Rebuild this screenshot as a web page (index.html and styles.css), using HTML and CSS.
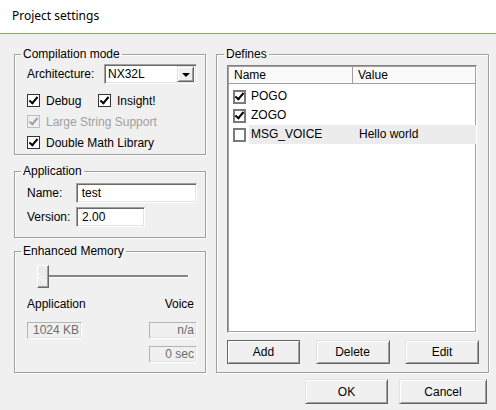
FILE: index.html
```html
<!DOCTYPE html>
<html lang="en">

<head>
    <meta charset="UTF-8">
    <title>Project settings</title>
    <link rel="stylesheet" href="styles.css">
</head>

<body>
    <!-- title bar -->
    <div class="titlebar">Project settings</div>

    <div class="main">
        <!-- left column -->
        <div class="col-left">
            <fieldset class="group">
                <legend>Compilation mode</legend>
                <div class="arch-row">
                    <span>Architecture:</span>
                    <div class="combo">
                        <span class="combo-text">NX32L</span>
                        <span class="combo-btn"><i class="tri"></i></span>
                    </div>
                </div>
                <div class="check-grid">
                    <label class="check"><span class="box on"></span>Debug</label>
                    <label class="check"><span class="box on"></span>Insight!</label>
                    <label class="check disabled full"><span class="box on"></span>Large String Support</label>
                    <label class="check full"><span class="box on"></span>Double Math Library</label>
                </div>
            </fieldset>

            <fieldset class="group app">
                <legend>Application</legend>
                <div class="field-row">
                    <span class="field-label">Name:</span>
                    <div class="edit name">test</div>
                </div>
                <div class="field-row">
                    <span class="field-label">Version:</span>
                    <div class="edit version">2.00</div>
                </div>
            </fieldset>

            <fieldset class="group mem">
                <legend>Enhanced Memory</legend>
                <div class="slider">
                    <span class="thumb"></span>
                    <span class="track"></span>
                </div>
                <div class="mem-labels">
                    <span>Application</span>
                    <span class="voice">Voice</span>
                </div>
                <div class="mem-row">
                    <div class="ro app-size">1024 KB</div>
                    <div class="ro">n/a</div>
                </div>
                <div class="mem-row right">
                    <div class="ro">0 sec</div>
                </div>
            </fieldset>
        </div>

        <!-- right column -->
        <fieldset class="group defines">
            <legend>Defines</legend>
            <div class="listview">
                <div class="lv-head">
                    <span class="lv-col name-col">Name</span>
                    <span class="lv-col value-col">Value</span>
                </div>
                <div class="lv-row">
                    <span class="lv-box on"></span>
                    <span class="lv-name">POGO</span>
                    <span class="lv-value"></span>
                </div>
                <div class="lv-row">
                    <span class="lv-box on"></span>
                    <span class="lv-name">ZOGO</span>
                    <span class="lv-value"></span>
                </div>
                <div class="lv-row selected">
                    <span class="lv-box"></span>
                    <span class="lv-name">MSG_VOICE</span>
                    <span class="lv-value">Hello world</span>
                </div>
            </div>
            <div class="lv-buttons">
                <button class="btn default">Add</button>
                <button class="btn">Delete</button>
                <button class="btn">Edit</button>
            </div>
        </fieldset>
    </div>

    <div class="footer">
        <button class="btn ok">OK</button>
        <button class="btn cancel">Cancel</button>
    </div>
</body>

</html>
```

FILE: styles.css
```css
* {
    box-sizing: border-box;
}

body {
    margin: 0;
    width: 496px;
    height: 410px;
    overflow: hidden;
    background: #f0f0f0;
    font-family: "Liberation Sans", Arial, sans-serif;
    font-size: 12px;
    color: #000;
}

/* 标题栏 */
.titlebar {
    height: 34px;
    background: #fff;
    border-bottom: 1px solid #86a868;
    padding-left: 12px;
    font-family: "Noto Sans", "Open Sans", sans-serif;
    font-size: 12px;
    line-height: 32px;
    color: #000;
}

.main {
    display: flex;
    gap: 10px;
    padding: 13px 0 0 14px;
}

.col-left {
    width: 192px;
    display: flex;
    flex-direction: column;
}

/* group boxes */
.group {
    margin: 0;
    min-width: 0;
    padding: 0 8px 0 12px;
    border: 1px solid #a0a0a0;
    box-shadow: 1px 1px 0 #fff, inset 1px 1px 0 #fff;
}

.group legend {
    margin-left: -6px;
    padding: 0 2px;
    line-height: 14px;
}

/* compilation mode */
.arch-row {
    display: flex;
    align-items: center;
    margin-top: 3px;
    height: 20px;
}

.combo {
    margin-left: auto;
    width: 93px;
    height: 20px;
    display: flex;
    align-items: center;
    background: #fff;
    border: 1px solid;
    border-color: #a0a0a0 #fff #fff #a0a0a0;
    box-shadow: inset 1px 1px 0 #696969, inset -1px -1px 0 #e3e3e3;
}

.combo-text {
    flex: 1;
    padding-left: 3px;
}

.combo-btn {
    width: 17px;
    height: 16px;
    margin-right: 2px;
    display: flex;
    align-items: center;
    justify-content: center;
    background: #f0f0f0;
    border: 1px solid;
    border-color: #e3e3e3 #696969 #696969 #e3e3e3;
    box-shadow: inset 1px 1px 0 #fff, inset -1px -1px 0 #a0a0a0;
}

.tri {
    width: 0;
    height: 0;
    border-left: 4px solid transparent;
    border-right: 4px solid transparent;
    border-top: 4px solid #000;
    margin-top: 1px;
}

.check-grid {
    display: grid;
    grid-template-columns: 71px auto;
    grid-auto-rows: 21px;
    margin: 6px 0 1px;
}

.check {
    display: flex;
    align-items: center;
}

.check.full {
    grid-column: 1 / 3;
}

.box {
    width: 13px;
    height: 13px;
    margin-right: 6px;
    background: #fff;
    border: 1px solid #333;
    position: relative;
}

.box.on::after {
    content: "";
    position: absolute;
    left: 3px;
    top: 0px;
    width: 3px;
    height: 7px;
    border-right: 2px solid #000;
    border-bottom: 2px solid #000;
    transform: rotate(40deg);
}

.check.disabled {
    color: #a0a0a0;
}

.check.disabled .box {
    border-color: #bcbcbc;
    background: #f0f0f0;
}

.check.disabled .box::after {
    border-color: #a0a0a0;
}

/* application */
.app {
    margin-top: 9px;
    padding-top: 5px;
    padding-bottom: 10px;
}

.field-row {
    display: flex;
    align-items: center;
    height: 20px;
}

.field-row + .field-row {
    margin-top: 4px;
}

.field-label {
    width: 49px;
}

.edit {
    height: 20px;
    line-height: 18px;
    padding-left: 5px;
    background: #fff;
    border: 1px solid;
    border-color: #a0a0a0 #fff #fff #a0a0a0;
    box-shadow: inset 1px 1px 0 #696969, inset -1px -1px 0 #e3e3e3;
}

.edit.name {
    width: 122px;
}

.edit.version {
    width: 69px;
}

/* enhanced memory */
.mem {
    margin-top: 6px;
    padding-bottom: 9px;
}

.slider {
    display: flex;
    align-items: center;
    margin-top: 7px;
    padding-left: 10px;
}

.thumb {
    width: 12px;
    height: 23px;
    background-color: #f4f4f4;
    background-image: repeating-linear-gradient(45deg, #e6e6e6 0 1px, transparent 1px 2px);
    border: 1px solid;
    border-color: #fff #696969 #696969 #fff;
    box-shadow: inset -1px -1px 0 #a0a0a0;
}

.track {
    width: 140px;
    height: 3px;
    background: #858585;
    border-bottom: 1px solid #fff;
    border-right: 1px solid #fff;
}

.mem-labels {
    display: flex;
    justify-content: space-between;
    line-height: 14px;
    margin-top: 9px;
}

.voice {
    margin-right: 3px;
}

.mem-row {
    display: flex;
    justify-content: space-between;
    margin-top: 11px;
}

.mem-row.right {
    justify-content: flex-end;
    margin-top: 7px;
}

.ro {
    width: 48px;
    height: 17px;
    line-height: 15px;
    padding-right: 2px;
    text-align: right;
    color: #6d6d6d;
    border: 1px solid;
    border-color: #b4b4b4 #fff #fff #b4b4b4;
    box-shadow: inset -1px -1px 0 #e3e3e3;
}

.ro.app-size {
    width: 55px;
}

/* defines */
.defines {
    width: 273px;
    display: flex;
    flex-direction: column;
    padding: 4px 8px 8px 10px;
}

.defines legend {
    margin-left: -3px;
}

.listview {
    flex: 1;
    width: 250px;
    background: #fff;
    border: 1px solid;
    border-color: #828282 #fff #fff #828282;
    box-shadow: inset 1px 1px 0 #a0a0a0, inset -1px -1px 0 #a0a0a0;
}

.lv-head {
    display: flex;
    height: 17px;
    margin-top: 1px;
    margin-left: 1px;
    line-height: 16px;
    background: #fafafa;
}

.lv-col {
    border-right: 1px solid #a0a0a0;
    border-bottom: 1px solid #a0a0a0;
}

.name-col {
    width: 124px;
    padding-left: 5px;
}

.value-col {
    width: 123px;
    padding-left: 5px;
}

.lv-row {
    display: flex;
    align-items: center;
    height: 19px;
    margin-left: 1px;
}

.lv-row:first-of-type,
.lv-head + .lv-row {
    margin-top: 3px;
}

.lv-box {
    width: 13px;
    height: 14px;
    margin: 0 3px 0 4px;
    border: 2px solid #7a7a7a;
    background: #fff;
    position: relative;
}

.lv-box.on::after {
    content: "";
    position: absolute;
    left: 2px;
    top: -1px;
    width: 3px;
    height: 7px;
    border-right: 2px solid #000;
    border-bottom: 2px solid #000;
    transform: rotate(40deg);
}

.lv-name {
    width: 104px;
    padding-left: 2px;
    line-height: 19px;
}

.lv-value {
    flex: 1;
    padding-left: 6px;
    line-height: 19px;
}

.lv-row.selected .lv-name,
.lv-row.selected .lv-value {
    background: #ececec;
}

.lv-buttons {
    display: flex;
    justify-content: space-between;
    margin-top: 7px;
    width: 252px;
}

/* buttons */
.btn {
    height: 24px;
    width: 74px;
    padding: 0;
    font-family: "Liberation Sans", Arial, sans-serif;
    font-size: 12px;
    color: #000;
    background: #f0f0f0;
    border: 1px solid;
    border-color: #e3e3e3 #646464 #646464 #e3e3e3;
    box-shadow: inset 1px 1px 0 #fff, inset -1px -1px 0 #a0a0a0;
}

.btn.default {
    width: 73px;
    border-color: #646464;
    box-shadow: inset 1px 1px 0 #fff, inset -1px -1px 0 #a0a0a0;
}

.footer {
    display: flex;
    justify-content: flex-end;
    gap: 11px;
    padding-right: 9px;
    margin-top: 6px;
}

.btn.ok {
    width: 83px;
    height: 25px;
}

.btn.cancel {
    width: 88px;
    height: 25px;
}
```
